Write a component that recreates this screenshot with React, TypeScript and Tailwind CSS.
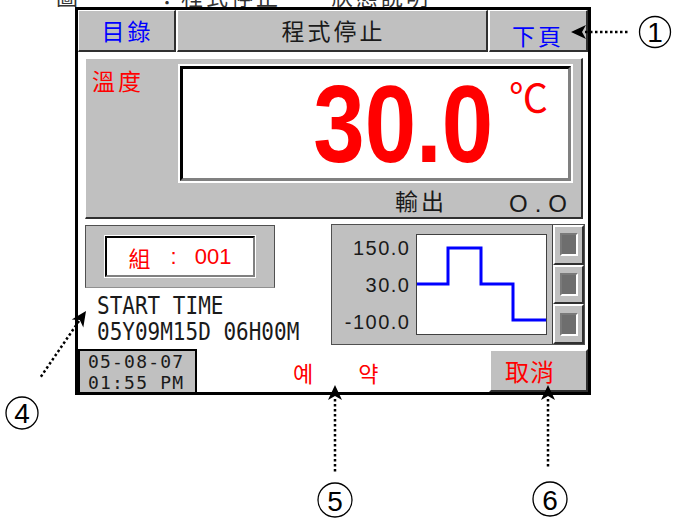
import React from "react";

const raisedTL = "border-t-white border-l-white border-b-[#303030] border-r-[#303030]";

function SideBtn() {
  return (
    <div className={`flex flex-1 items-center justify-center border-2 ${raisedTL} bg-[#c0c0c0]`}>
      <div className="h-[23px] w-[18px] border-2 border-t-[#7a7a7a] border-l-[#7a7a7a] border-b-white border-r-white bg-[#6e6e6e]" />
    </div>
  );
}

export default function App() {
  return (
    <div className="relative h-[518px] w-[674px] overflow-hidden bg-white font-['Noto_Sans_CJK_TC','Noto_Sans_CJK_KR',sans-serif]">
      {/* caption cut off at the top */}
      <div className="h-[7px] overflow-hidden pl-[56px]">
        <div className="-mt-[18px] whitespace-nowrap text-[22px] leading-[26px] tracking-[3px] text-[#333]">
          圖一　　：程式停止　　狀態說明
        </div>
      </div>

      {/* panel */}
      <div className="ml-[75px] flex h-[388px] w-[516px] flex-col border-[3px] border-black bg-white">
        {/* top bar */}
        <div className="flex h-[42px]">
          <div className={`flex w-[98px] items-center justify-center border-t border-l border-b-2 border-r-2 ${raisedTL} bg-[#c0c0c0] pl-[2px] text-[23px] leading-none tracking-[3px] text-[#0000ff]`}>
            目錄
          </div>
          <div className={`ml-[1px] flex w-[311px] items-center justify-center border-t border-l border-b-2 border-r-2 ${raisedTL} bg-[#c0c0c0] pl-[3px] text-[23px] leading-none tracking-[3px] text-[#1a1a1a]`}>
            程式停止
          </div>
          <div className={`ml-[1px] flex w-[99px] items-center justify-center border-t border-l border-b-2 border-r-2 ${raisedTL} bg-[#c0c0c0] pt-[10px] text-[23px] leading-none tracking-[3px] text-[#0000ff]`}>
            下頁
          </div>
        </div>

        {/* temperature block */}
        <div className={`ml-[7px] mt-[6px] flex h-[161px] w-[498px] border-t border-l border-b-2 border-r-2 ${raisedTL} bg-[#c0c0c0]`}>
          <div className="w-[92px] pl-[6px] pt-[10px] text-[23px] leading-none tracking-[3px] text-[#ff0000]">溫度</div>
          <div className="flex flex-col pt-[5px]">
            <div className="h-[119px] w-[395px] border-2 border-white">
              <div className="flex h-full w-full items-start justify-end border-[3px] border-t-black border-l-black border-b-[#808080] border-r-[#808080] bg-white pr-[20px]">
                <span className="origin-right scale-x-[0.84] font-['Liberation_Sans',Arial,sans-serif] text-[110px] font-bold leading-none text-[#ff0000]">
                  30.0
                </span>
                <span className="ml-[16px] mt-[7px] font-['Noto_Sans_CJK_TC',serif] text-[39px] leading-none text-[#ff0000]">
                  ℃
                </span>
              </div>
            </div>
            <div className="mt-[6px] flex items-start pl-[217px]">
              <span className="text-[23px] leading-none tracking-[3px] text-[#1a1a1a]">輸出</span>
              <span className="ml-[62px] mt-[3px] font-['Liberation_Sans',Arial,sans-serif] text-[24px] leading-none tracking-[7px] text-[#1a1a1a]">
                O.O
              </span>
            </div>
          </div>
        </div>

        {/* middle section */}
        <div className="mt-[5px] flex h-[121px]">
          <div className="flex w-[253px] flex-col">
            <div className="ml-[7px] mt-[1px] flex h-[63px] w-[190px] items-center justify-center border border-t-[#505050] border-r-[#505050] border-l-[#505050] border-b-[#909090] bg-[#c0c0c0]">
              <div className="border border-white">
                <div className="flex h-[41px] w-[150px] items-center justify-center border-2 border-t-black border-l-black border-b-[#808080] border-r-[#808080] bg-white text-[22px] leading-none text-[#ff0000]">
                  <span>組</span>
                  <span className="ml-[20px] font-['Liberation_Sans',Arial,sans-serif]">:</span>
                  <span className="ml-[18px] font-['Liberation_Sans',Arial,sans-serif]">001</span>
                </div>
              </div>
            </div>
            <div className="ml-[19px] mt-[5px] origin-top-left scale-y-[1.17] whitespace-pre font-['DejaVu_Sans_Mono',monospace] text-[21px] leading-[22px] text-[#1a1a1a]">
              <div>START TIME</div>
              <div>05Y09M15D 06H00M</div>
            </div>
          </div>

          {/* chart box */}
          <div className="flex h-[121px] w-[254px] border border-[#505050] bg-[#c0c0c0]">
            <div className="-mr-[1.5px] flex w-[78.5px] flex-col items-end gap-[17px] pt-[13px] font-['Liberation_Sans',Arial,sans-serif] text-[20px] leading-[20px] tracking-[1.5px] text-[#1a1a1a]">
              <span>150.0</span>
              <span>30.0</span>
              <span>-100.0</span>
            </div>
            <div className="ml-[7px] mt-[9px] h-[101px] w-[131px] border border-[#404040] bg-white">
              <svg width="129" height="99" viewBox="0 0 129 99" className="block">
                <polyline
                  points="0,49 31,49 31,13 64,13 64,49 96,49 96,85 129,85"
                  fill="none"
                  stroke="#0000ff"
                  strokeWidth="3"
                />
              </svg>
            </div>
            <div className="ml-[5px] flex w-[32px] flex-col border-l border-[#404040]">
              <SideBtn />
              <SideBtn />
              <SideBtn />
            </div>
          </div>
        </div>

        {/* bottom row */}
        <div className="mt-[4px] flex h-[43px] items-stretch">
          <div className="w-[119px] border-t-2 border-l-2 border-r-2 border-black bg-[#c0c0c0] pl-[8px] font-['DejaVu_Sans_Mono',monospace] text-[18px] leading-[21px] tracking-[1.2px] text-[#1a1a1a]">
            <div>05-08-07</div>
            <div>01:55 PM</div>
          </div>
          <div className="ml-[96px] flex items-center pt-[2px] font-['Noto_Sans_CJK_KR',sans-serif] text-[22px] leading-none text-[#ff0000]">
            <span>예</span>
            <span className="ml-[45px]">약</span>
          </div>
          <div className={`ml-auto flex w-[99px] items-center border-2 ${raisedTL} bg-[#c0c0c0] pl-[14px] text-[24px] leading-none tracking-[1px] text-[#ff0000]`}>
            取消
          </div>
        </div>
      </div>

      {/* annotations */}
      <svg className="pointer-events-none absolute left-0 top-0" width="674" height="518" viewBox="0 0 674 518">
        <g stroke="#000" strokeWidth="2.5" strokeDasharray="2.5 2.5" fill="none">
          <line x1="585" y1="32" x2="628" y2="32" />
          <line x1="79" y1="321" x2="40" y2="378" />
          <line x1="335" y1="399" x2="335" y2="473" />
          <line x1="548" y1="399" x2="548" y2="469" />
        </g>
        <g fill="#000">
          <polygon points="571,32 586,25 582,32 586,39" />
          <polygon points="86,311 83.3,327.4 79.8,320.1 71.7,319.4" />
          <polygon points="335,385 328,400 335,396 342,400" />
          <polygon points="548,385 541,400 548,396 555,400" />
        </g>
        <g fill="none" stroke="#000" strokeWidth="1.3">
          <circle cx="655" cy="32" r="15.5" />
          <circle cx="22" cy="413" r="16" />
          <circle cx="335" cy="500" r="17" />
          <circle cx="550" cy="499" r="17" />
        </g>
        <g fontFamily="Liberation Sans, Arial, sans-serif" fontSize="28" textAnchor="middle" fill="#000">
          <text x="655" y="42">1</text>
          <text x="22" y="423">4</text>
          <text x="335" y="510.5">5</text>
          <text x="550" y="509.5">6</text>
        </g>
      </svg>
    </div>
  );
}
